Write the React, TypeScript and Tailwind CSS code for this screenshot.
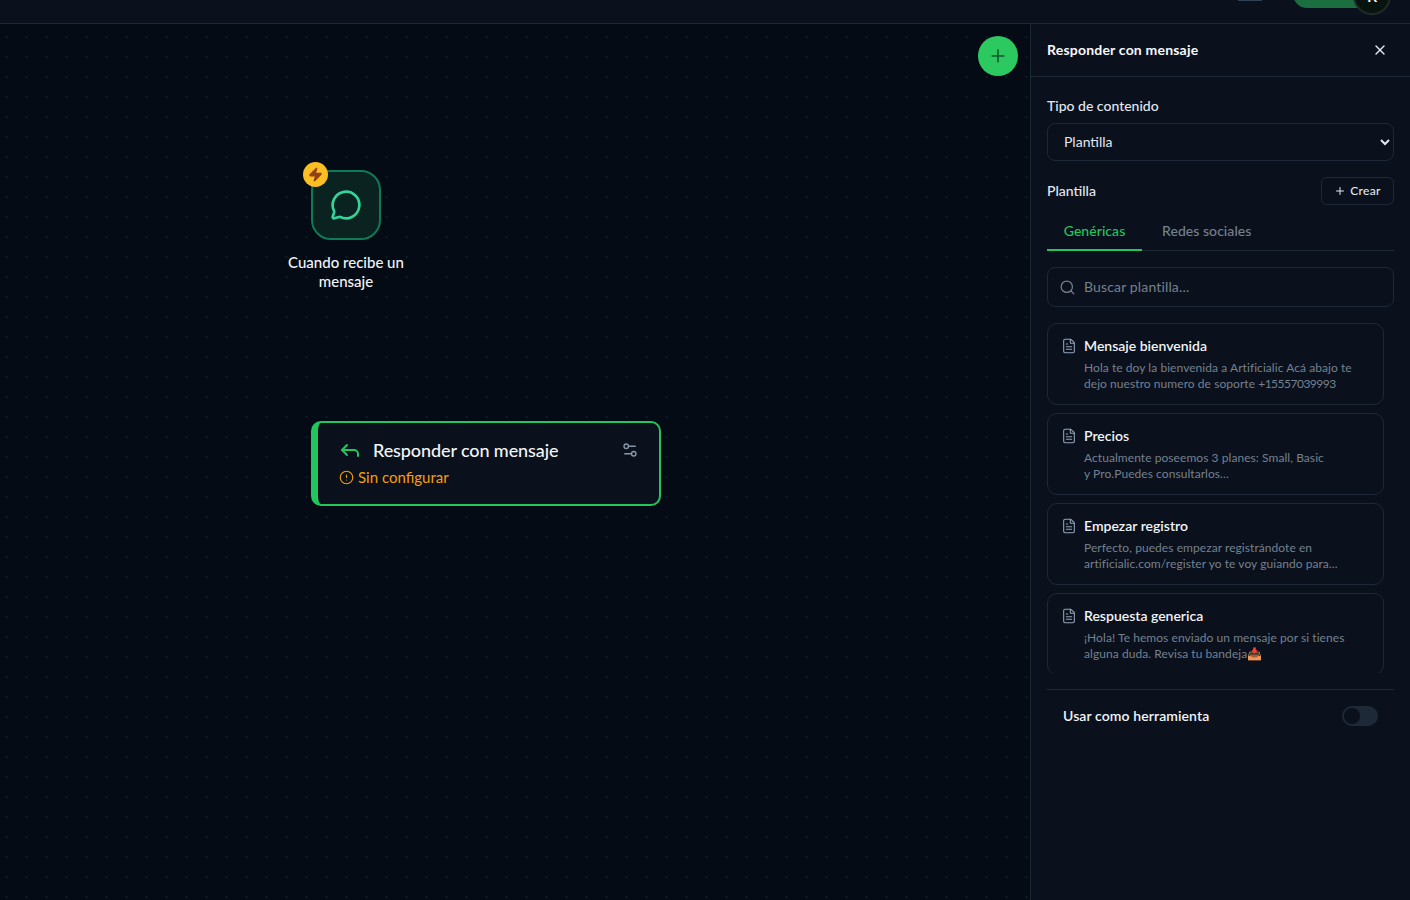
import type { ReactNode } from 'react';
import { CircleAlert, FileText, MessageCircle, Plus, Reply, Search, Settings2, X, Zap } from 'lucide-react';

const templates: { title: string; lines: ReactNode[] }[] = [
  {
    title: 'Mensaje bienvenida',
    lines: [
      'Hola te doy la bienvenida a Artificialic Acá abajo te',
      <>dejo nuestro numero de soporte <span className="tracking-[-0.5px]">+15557039993</span></>,
    ],
  },
  { title: 'Precios', lines: ['Actualmente poseemos 3 planes: Small, Basic', 'y Pro.Puedes consultarlos...'] },
  { title: 'Empezar registro', lines: ['Perfecto, puedes empezar registrándote en', 'artificialic.com/register yo te voy guiando para...'] },
  { title: 'Respuesta generica', lines: ['¡Hola! Te hemos enviado un mensaje por si tienes', 'alguna duda. Revisa tu bandeja📥'] },
];

function TemplateCard({ title, lines }: { title: string; lines: ReactNode[] }) {
  return (
    <div className="flex h-[82px] shrink-0 gap-[7px] rounded-[10px] border border-[#1e2937] pl-[13px] pt-[12px]">
      <FileText className="mt-[2px] h-4 w-4 text-[#94a3b8]" strokeWidth={1.6} />
      <div>
        <p className="text-[14px] leading-[20px] font-semibold text-[#f1f5f9]">{title}</p>
        <div className="mt-[4px] text-[12px] leading-[16px] tracking-[0.06px] text-[#75808f]">
          {lines.map((line, i) => (
            <p key={i} className="whitespace-nowrap">{line}</p>
          ))}
        </div>
      </div>
    </div>
  );
}

export default function App() {
  return (
    <div className="flex h-screen w-full flex-col overflow-hidden bg-[#050b14] font-['Lato','Liberation_Sans',sans-serif] text-white">
      <header className="flex h-[24px] shrink-0 items-end justify-end overflow-hidden border-b border-[#1e2937] bg-[#0a111c] pr-[19px]">
        <div className="mb-[22px] mr-[31px] h-px w-[24px] bg-[#334155]" />
        <div className="mb-[15px] h-[30px] w-[70px] rounded-bl-[14px] bg-[#1a6e3f]" />
        <div className="-ml-[10px] mb-[8px] flex h-[38px] w-[38px] shrink-0 items-end justify-center rounded-full border-2 border-[#1f2b28] bg-[#07140e] pb-[9px] text-[16px] leading-none font-semibold">
          R
        </div>
      </header>

      <main className="flex min-h-0 flex-1">
        <section className="relative flex-1 bg-[#050b14] bg-[radial-gradient(circle,#0e1c25_1px,transparent_1.2px)] bg-[position:-3.5px_3px] bg-[size:20px_20px]">
          <button className="absolute right-[12px] top-[12px] flex h-10 w-10 items-center justify-center rounded-full bg-[#2bc95f] text-[#0f5a2e]">
            <Plus className="h-5 w-5" strokeWidth={2} />
          </button>

          <div className="absolute left-[281px] top-[146px] flex w-[130px] flex-col items-center">
            <div className="relative flex h-[70px] w-[70px] items-center justify-center rounded-[20px] border-2 border-[#0d7a58] bg-[#0a2320]">
              <MessageCircle className="h-[32px] w-[32px] text-[#34d399]" strokeWidth={2} />
              <div className="absolute -left-[10px] -top-[10px] flex h-[25px] w-[25px] items-center justify-center rounded-full bg-[#fbbf24]">
                <Zap className="h-[15px] w-[15px] fill-[#92400e] text-[#92400e]" />
              </div>
            </div>
            <p className="mt-[13px] text-center text-[15px] leading-[19px] font-medium text-[#f1f5f9]">
              Cuando recibe un mensaje
            </p>
          </div>

          <div className="absolute left-[311px] top-[397px] h-[85px] w-[350px] rounded-[10px] border-2 border-l-[7px] border-[#22c55e] bg-[#0a111c] pl-[20px] pr-[20px] pt-[14px]">
            <div className="flex h-[26px] items-center">
              <Reply className="h-6 w-6 text-[#22c55e]" strokeWidth={2} />
              <span className="ml-[11px] flex-1 text-[18px] font-medium tracking-[-0.1px] text-[#f1f5f9]">Responder con mensaje</span>
              <Settings2 className="h-[18px] w-[18px] text-[#8a97a8]" strokeWidth={1.8} />
            </div>
            <div className="ml-px mt-[3px] flex h-[22px] items-center gap-[4px] text-[15px] text-[#f59e0b]">
              <CircleAlert className="h-[15px] w-[15px]" strokeWidth={1.8} />
              Sin configurar
            </div>
          </div>
        </section>

        <aside className="flex w-[380px] shrink-0 flex-col border-l border-[#1e2937] bg-[#0a111c]">
          <div className="flex h-[53px] shrink-0 items-center justify-between border-b border-[#1e2937] pl-[16px] pr-[22px]">
            <h2 className="pb-[2px] text-[14px] font-bold tracking-[0.2px] text-[#f8fafc]">Responder con mensaje</h2>
            <X className="h-4 w-4 text-[#e2e8f0]" />
          </div>

          <div className="flex min-h-0 flex-1 flex-col pl-[16px] pr-[16px] pt-[19px]">
            <label className="text-[14px] leading-[20px] font-medium text-[#e2e8f0]">Tipo de contenido</label>
            <select className="mt-[7px] h-[38px] w-full shrink-0 rounded-[8px] border border-[#1e2937] bg-[#0a111c] pb-[1px] pl-[12px] text-[14px] text-[#e2e8f0] [color-scheme:dark]">
              <option>Plantilla</option>
            </select>

            <div className="mt-[16px] flex h-[28px] items-center justify-between">
              <span className="pb-[2px] text-[14px] font-medium text-[#e2e8f0]">Plantilla</span>
              <button className="flex h-[28px] w-[73px] items-center justify-center gap-[4px] rounded-[6px] border border-[#1e2937] pb-[1px] text-[12px] font-medium tracking-[0.3px] text-[#e2e8f0]">
                <Plus className="h-3 w-3" />
                Crear
              </button>
            </div>

            <div className="mt-[12px] flex h-[34px] shrink-0 border-b border-[#1e2937] text-[14px] font-medium tracking-[0.05px]">
              <div className="-mb-px flex h-[34px] w-[95px] items-center justify-center border-b-2 border-[#22c55e] pb-[5px] text-[#22c55e]">Genéricas</div>
              <div className="flex h-[33px] items-center pb-[6px] pl-[20px] text-[#75808f]">Redes sociales</div>
            </div>

            <div className="mt-[16px] flex h-[40px] shrink-0 items-center gap-[8px] rounded-[8px] border border-[#1e2937] pl-[11px] text-[14px] tracking-[0.15px] text-[#75808f]">
              <Search className="h-[17px] w-[17px]" strokeWidth={1.8} />
              <span className="pb-[2px]">Buscar plantilla...</span>
            </div>

            <div className="mt-[16px] flex h-[350px] shrink-0 flex-col gap-[8px] overflow-hidden pr-[10px]">
              {templates.map((t) => (
                <TemplateCard key={t.title} title={t.title} lines={t.lines} />
              ))}
            </div>

            <div className="mt-[16px] flex h-[53px] shrink-0 items-center justify-between border-t border-[#1e2937] pl-[16px] pr-[16px]">
              <span className="pb-[2px] text-[14px] font-semibold tracking-[0.1px] text-[#f1f5f9]">Usar como herramienta</span>
              <div className="flex h-[20px] w-[36px] items-center rounded-full bg-[#1e2937] pl-[2px]">
                <div className="h-[16px] w-[16px] rounded-full bg-[#0a111c]" />
              </div>
            </div>
          </div>
        </aside>
      </main>
    </div>
  );
}
